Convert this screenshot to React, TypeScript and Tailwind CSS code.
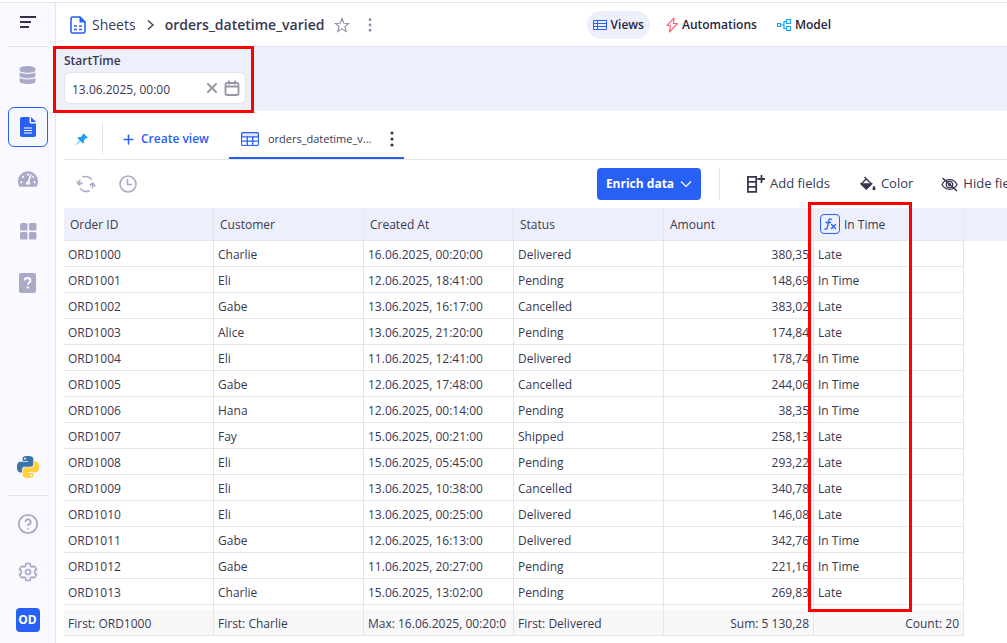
import type { ReactNode } from "react";
import { CircleHelp, Plus, X } from "lucide-react";
import { FaDatabase, FaTachometerAlt } from "react-icons/fa";

const orders = [
  { id: "ORD1000", customer: "Charlie", created: "16.06.2025, 00:20:00", status: "Delivered", amount: "380,35", inTime: "Late" },
  { id: "ORD1001", customer: "Eli", created: "12.06.2025, 18:41:00", status: "Pending", amount: "148,69", inTime: "In Time" },
  { id: "ORD1002", customer: "Gabe", created: "13.06.2025, 16:17:00", status: "Cancelled", amount: "383,02", inTime: "Late" },
  { id: "ORD1003", customer: "Alice", created: "13.06.2025, 21:20:00", status: "Pending", amount: "174,84", inTime: "Late" },
  { id: "ORD1004", customer: "Eli", created: "11.06.2025, 12:41:00", status: "Delivered", amount: "178,74", inTime: "In Time" },
  { id: "ORD1005", customer: "Gabe", created: "12.06.2025, 17:48:00", status: "Cancelled", amount: "244,06", inTime: "In Time" },
  { id: "ORD1006", customer: "Hana", created: "12.06.2025, 00:14:00", status: "Pending", amount: "38,35", inTime: "In Time" },
  { id: "ORD1007", customer: "Fay", created: "15.06.2025, 00:21:00", status: "Shipped", amount: "258,13", inTime: "Late" },
  { id: "ORD1008", customer: "Eli", created: "15.06.2025, 05:45:00", status: "Pending", amount: "293,22", inTime: "Late" },
  { id: "ORD1009", customer: "Eli", created: "13.06.2025, 10:38:00", status: "Cancelled", amount: "340,78", inTime: "Late" },
  { id: "ORD1010", customer: "Eli", created: "13.06.2025, 00:25:00", status: "Delivered", amount: "146,08", inTime: "Late" },
  { id: "ORD1011", customer: "Gabe", created: "12.06.2025, 16:13:00", status: "Delivered", amount: "342,76", inTime: "In Time" },
  { id: "ORD1012", customer: "Gabe", created: "11.06.2025, 20:27:00", status: "Pending", amount: "221,16", inTime: "In Time" },
  { id: "ORD1013", customer: "Charlie", created: "15.06.2025, 13:02:00", status: "Pending", amount: "269,83", inTime: "Late" },
];

const columns = ["Order ID", "Customer", "Created At", "Status", "Amount", "In Time"];

const totals = [
  "First: ORD1000",
  "First: Charlie",
  "Max: 16.06.2025, 00:20:0",
  "First: Delivered",
  "Sum: 5 130,28",
  "Count: 20",
];

function Dots({ className }: { className: string }) {
  return (
    <svg viewBox="0 0 4 16" className={className} fill="currentColor">
      <circle cx="2" cy="2" r="1.6" />
      <circle cx="2" cy="8" r="1.6" />
      <circle cx="2" cy="14" r="1.6" />
    </svg>
  );
}

function SheetIcon() {
  return (
    <svg viewBox="0 0 16 18" className="h-[18px] w-4 shrink-0 text-[#2860f6]" fill="none" stroke="currentColor" strokeWidth="1.600">
      <path d="M3 1h7l5 5v9.500a1.500 1.500 0 0 1-1.500 1.500h-11A1.500 1.500 0 0 1 1 15.500v-13A1.500 1.500 0 0 1 2.500 1z" />
      <path d="M9.500 0v6.500H16z" fill="currentColor" stroke="none" />
      <path d="M4 10h3M9 10h3M4 13.500h3M9 13.500h3" />
    </svg>
  );
}

function DocumentIcon() {
  return (
    <svg viewBox="0 0 16 20" className="h-5 w-4 text-[#2860f6]">
      <path d="M2 0h7.500v5a1.500 1.500 0 0 0 1.500 1.500h5V18a2 2 0 0 1-2 2H2a2 2 0 0 1-2-2V2a2 2 0 0 1 2-2z" fill="currentColor" />
      <path d="M11 0l5 5h-5z" fill="currentColor" />
      <path d="M4 11h8M4 13.500h8M4 16h8" stroke="white" strokeWidth="1.200" />
    </svg>
  );
}

function TilesIcon() {
  return (
    <svg viewBox="0 0 18 18" className="size-[18px]" fill="currentColor">
      <rect x="1" y="1" width="7.500" height="7.500" rx="1.500" />
      <rect x="10" y="1" width="7.500" height="7.500" rx="1.500" />
      <rect x="1" y="10" width="7.500" height="7.500" rx="1.500" />
      <rect x="10" y="10" width="7.500" height="7.500" rx="1.500" />
    </svg>
  );
}

function GuideIcon() {
  return (
    <svg viewBox="0 0 17 20" className="h-5 w-[17px]">
      <rect width="17" height="20" rx="2" fill="currentColor" />
      <path d="M5.500 7.500C5.600 5.800 6.800 5 8.500 5s3 .9 3 2.500c0 1.900-2.700 2-2.700 4.200" fill="none" stroke="white" strokeWidth="1.800" />
      <circle cx="8.700" cy="14.500" r="1.200" fill="white" />
    </svg>
  );
}

function PythonLogo() {
  return (
    <svg viewBox="0 0 24 24" className="size-[22px]">
      <path
        fill="#3a77a8"
        d="M14.25.18l.9.2.73.26.59.3.45.32.34.34.25.34.16.33.1.3.04.26.02.2-.01.13V8.5l-.05.63-.13.55-.21.46-.26.38-.3.31-.33.25-.35.19-.35.14-.33.1-.3.07-.26.04-.21.02H8.77l-.69.05-.59.14-.5.22-.41.27-.33.32-.27.35-.2.36-.15.37-.1.35-.07.32-.04.27-.02.21v3.06H3.17l-.21-.03-.28-.07-.32-.12-.35-.18-.36-.26-.36-.36-.35-.46-.32-.59-.28-.73-.21-.88-.14-1.05-.05-1.23.06-1.22.16-1.04.24-.87.32-.71.36-.57.4-.44.42-.33.42-.24.4-.16.36-.1.32-.05.24-.01h.16l.06.01h8.16v-.83H6.18l-.01-2.75-.02-.37.05-.34.11-.31.17-.28.25-.26.31-.23.38-.2.44-.18.51-.15.58-.12.64-.1.71-.06.77-.04.84-.02 1.27.05zm-6.3 1.98l-.23.33-.08.41.08.41.23.34.33.22.41.09.41-.09.33-.22.23-.34.08-.41-.08-.41-.23-.33-.33-.22-.41-.09-.41.09z"
      />
      <path
        fill="#ffd040"
        d="M21.04 6.11l.28.06.32.12.35.18.36.27.36.35.35.47.32.59.28.73.21.88.14 1.04.05 1.23-.06 1.23-.16 1.04-.24.86-.32.71-.36.57-.4.45-.42.33-.42.24-.4.16-.36.09-.32.05-.24.02-.16-.01h-8.22v.82h5.84l.01 2.76.02.36-.05.34-.11.31-.17.29-.25.25-.31.24-.38.2-.44.17-.51.15-.58.13-.64.09-.71.07-.77.04-.84.01-1.27-.04-1.07-.14-.9-.2-.73-.25-.59-.3-.45-.33-.34-.34-.25-.34-.16-.33-.1-.3-.04-.25-.02-.2.01-.13v-5.34l.05-.64.13-.54.21-.46.26-.38.3-.32.33-.24.35-.2.35-.14.33-.1.3-.06.26-.04.21-.02.13-.01h5.84l.69-.05.59-.14.5-.21.41-.28.33-.32.27-.35.2-.36.15-.36.1-.35.07-.32.04-.28.02-.21V6.07h2.09l.14.01zm-6.47 14.25l-.23.33-.08.41.08.41.23.33.33.23.41.08.41-.08.33-.23.23-.33.08-.41-.08-.41-.23-.33-.33-.23-.41-.08-.41.08z"
      />
    </svg>
  );
}

function GearIcon() {
  return (
    <svg viewBox="0 0 20 20" className="size-5" fill="none" stroke="currentColor" strokeWidth="1.700" strokeLinejoin="round">
      <path d="M8 1.500h4l.5 2.400 1.700 1 2.300-.8 2 3.400L16.700 9v2l1.800 1.500-2 3.400-2.300-.8-1.700 1-.5 2.400H8l-.5-2.400-1.700-1-2.300.8-2-3.400L3.300 11V9L1.500 7.500l2-3.400 2.300.8 1.700-1z" />
      <circle cx="10" cy="10" r="2.500" />
    </svg>
  );
}

function SideButton({ label, active, children }: { label: string; active?: boolean; children: ReactNode }) {
  return (
    <button
      aria-label={label}
      className={
        active
          ? "flex size-10 items-center justify-center rounded-md border border-[#2860f6] bg-[#f5f7ff]"
          : "flex size-10 items-center justify-center text-[#a9abc6]"
      }
    >
      {children}
    </button>
  );
}

function Sidebar() {
  return (
    <nav className="flex w-14 shrink-0 flex-col items-center border-r border-[#e4e5ec] bg-[#f9f9ff] pb-[11px]">
      <button aria-label="Toggle menu" className="flex h-[43px] w-10 items-center justify-center pb-[6px] text-[#33334f]">
        <svg viewBox="0 0 16 12" className="h-3 w-4" stroke="currentColor" strokeWidth="2">
          <path d="M0 1h16M0 6h11M0 11h9" />
        </svg>
      </button>
      <div className="h-px w-10 bg-[#e4e5ec]" />
      <div className="mt-2 flex flex-col gap-3">
        <SideButton label="Data sources">
          <FaDatabase className="h-[18px] w-[17px]" />
        </SideButton>
        <SideButton label="Sheets" active>
          <DocumentIcon />
        </SideButton>
        <SideButton label="Dashboards">
          <FaTachometerAlt className="size-5" />
        </SideButton>
        <SideButton label="Apps">
          <TilesIcon />
        </SideButton>
        <SideButton label="Guide">
          <GuideIcon />
        </SideButton>
      </div>
      <button aria-label="Python" className="mt-auto flex size-6 items-center justify-center">
        <PythonLogo />
      </button>
      <div className="mt-4 h-px w-10 bg-[#e4e5ec]" />
      <button aria-label="Help" className="mt-4 flex size-6 items-center justify-center text-[#a9abc6]">
        <CircleHelp size={22} strokeWidth={2} />
      </button>
      <button aria-label="Settings" className="mt-6 flex size-6 items-center justify-center text-[#a9abc6]">
        <GearIcon />
      </button>
      <button className="mt-6 size-6 rounded bg-[#2860f6] text-xs font-bold text-white">OD</button>
    </nav>
  );
}

function Header() {
  return (
    <header className="flex h-11 shrink-0 items-center border-b border-[#e4e5ec] pl-[14px] text-sm">
      <SheetIcon />
      <a href="#sheets" className="ml-[6px]">Sheets</a>
      <svg viewBox="0 0 7 12" className="ml-[11px] h-3 w-[7px]" fill="none" stroke="currentColor" strokeWidth="1.300">
        <path d="M1 1.500L6 6l-5 4.500" />
      </svg>
      <h1 className="ml-[11px] font-semibold">orders_datetime_varied</h1>
      <button aria-label="Add to favourites" className="ml-[10px] text-[#8c8ea8]">
        <svg viewBox="0 0 16 16" className="size-4" fill="none" stroke="currentColor" strokeWidth="1.100">
          <path d="M8 1.500l1.800 4.700 4.900.3-3.800 3.200 1.300 4.900L8 11.900l-4.200 2.700 1.300-4.900L1.300 6.500l4.900-.3z" />
        </svg>
      </button>
      <button aria-label="Sheet menu" className="ml-[18px] text-[#8c8ea8]">
        <Dots className="h-[14px] w-1" />
      </button>
      <div className="mr-[176px] ml-auto flex items-center gap-4 text-xs font-semibold text-[#26263e]">
        <button className="flex h-7 items-center gap-1 rounded-full bg-[#edf0fa] px-[6px]">
          <svg viewBox="0 0 14 12" className="h-3 w-[14px] text-[#2860f6]" fill="none" stroke="currentColor">
            <path d="M.5 1.500h13v9H.5zM.5 4.500h13M.5 7.500h13M4.500 1.500v9" />
          </svg>
          Views
        </button>
        <button className="flex items-center gap-1">
          <svg viewBox="0 0 12 16" className="h-4 w-3" fill="none" stroke="#ff6878" strokeWidth="1.200" strokeLinejoin="round">
            <path d="M8 1L1 8.500h3.500L3.500 15 11.500 6.500H7.500z" />
          </svg>
          Automations
        </button>
        <button className="ml-1 flex items-center gap-1">
          <svg viewBox="0 0 14 14" className="size-[14px]" fill="none" stroke="#1da0fa" strokeWidth="1.200">
            <path d="M.5 5.500h3v3h-3zM9.500 1.500h4v4h-4zM9.500 8.500h4v4h-4zM3.500 7H7M9.500 3.500H7v7h2.500" />
          </svg>
          Model
        </button>
      </div>
    </header>
  );
}

function FilterBar() {
  return (
    <section className="relative h-16 shrink-0 bg-[#edf0fa] pt-[5px] pl-2">
      <label htmlFor="start-time" className="block text-xs leading-[18px] font-semibold">StartTime</label>
      <div className="mt-[2px] flex h-8 w-[182px] items-center rounded-md border border-[#e4e5ec] bg-white pr-[5px]">
        <input id="start-time" defaultValue="13.06.2025, 00:00" className="h-full min-w-0 flex-1 pt-[2px] pl-[7px] text-xs outline-none" />
        <button aria-label="Clear" className="text-[#9697a8]">
          <X size={16} strokeWidth={3} />
        </button>
        <button aria-label="Open calendar" className="ml-1 text-[#9697a8]">
          <svg viewBox="0 0 16 16" className="size-4" fill="none" stroke="currentColor" strokeWidth="1.800">
            <rect x="1.500" y="3" width="13" height="12" rx="1.500" />
            <path d="M1.500 6.500h13M5 .5v4M11 .5v4" />
          </svg>
        </button>
      </div>
      <div className="pointer-events-none absolute -top-px -left-[3px] z-10 h-[67px] w-[201px] border-3 border-[#fe0000]" />
    </section>
  );
}

function ViewTabs() {
  return (
    <div className="ml-2 flex h-[49px] shrink-0 items-stretch border-b border-[#e4e5ec]">
      <button aria-label="Pin" className="ml-3 pt-2 text-[#1da0fa]">
        <svg viewBox="0 0 12 12" className="size-3" fill="currentColor">
          <path d="M7.500.3l4.200 4.200-1 .9-.8-.2-2 2 .2 2.300-1.200 1.100-2.500-2.500L.8 11.700l-.5-.5 3.600-3.600L1.400 5.100 2.500 4l2.300.1 2-2-.2-.8z" />
        </svg>
      </button>
      <div className="mt-3 ml-[14px] h-8 w-px bg-[#e4e5ec]" />
      <button className="ml-[18px] flex items-center gap-[5px] pt-2 text-xs font-semibold text-[#2860f6]">
        <Plus size={15} strokeWidth={2.4} />
        Create view
      </button>
      <div className="ml-5 flex w-[175px] items-center border-b-2 border-[#2860f6] pt-[10px] pl-3 text-[11px]">
        <svg viewBox="0 0 18 14" className="h-[14px] w-[18px] shrink-0" fill="none" stroke="#2860f6" strokeWidth="1.300">
          <rect x=".6" y=".6" width="16.800" height="12.800" rx="1.500" fill="#e0e9ff" />
          <path d="M1.200 5h15.600v6.500a1.300 1.300 0 0 1-1.300 1.300h-13a1.300 1.300 0 0 1-1.300-1.300z" fill="white" stroke="none" />
          <path d="M.6 4.800h16.800M.6 9.200h16.800M6.300 4.800v8.500M11.700 4.800v8.500" />
        </svg>
        <button className="ml-[9px] w-[107px] text-left whitespace-nowrap">orders_datetime_v...</button>
        <button aria-label="View menu" className="ml-[15px]">
          <Dots className="h-4 w-1" />
        </button>
      </div>
    </div>
  );
}

function Toolbar() {
  return (
    <div className="flex h-12 shrink-0 items-center pl-5 text-[13px] font-medium">
      <button aria-label="Refresh" className="text-[#a9abc6]">
        <svg viewBox="0 0 20 18" className="h-[18px] w-5" fill="none" stroke="currentColor" strokeWidth="1.600">
          <path d="M6.500 2.300A7.300 7.300 0 0 1 15.800 4.600M13.500 15.700A7.300 7.300 0 0 1 4.200 13.400M3.200 9.500A7 7 0 0 1 4.200 4.600M16.800 8.500a7 7 0 0 1-1 4.900" />
          <path d="M.8 6.600L3.200 9.800l3-2.300M19.200 11.400L16.800 8.200l-3 2.300" />
        </svg>
      </button>
      <button aria-label="History" className="ml-[22px] text-[#a9abc6]">
        <svg viewBox="0 0 20 20" className="size-5" fill="none" stroke="currentColor" strokeWidth="1.600">
          <circle cx="10" cy="10" r="8" />
          <path d="M9.500 5v5.500H14" />
        </svg>
      </button>
      <div className="ml-auto flex w-[410px] items-center overflow-hidden whitespace-nowrap">
        <button className="flex h-8 w-[104px] shrink-0 items-center justify-center gap-[6px] rounded bg-[#2860f6] text-xs font-bold text-white">
          Enrich data
          <svg viewBox="0 0 12 8" className="h-2 w-3" fill="none" stroke="currentColor" strokeWidth="1.200">
            <path d="M1 1.500l5 5 5-5" />
          </svg>
        </button>
        <div className="ml-[18px] h-8 w-px shrink-0 bg-[#e4e5ec]" />
        <button className="ml-[27px] flex shrink-0 items-center gap-[5px]">
          <svg viewBox="0 0 18 18" className="size-[18px]" fill="none" stroke="currentColor" strokeWidth="1.800">
            <path d="M.9 1.800h8.300v15H.9zM.9 6.800h8.300M.9 11.800h8.300" />
            <path d="M14.500 0v8M10.500 4h8" />
          </svg>
          Add fields
        </button>
        <button className="ml-[30px] flex shrink-0 items-center gap-[5px]">
          <svg viewBox="0 0 16 16" className="size-4" fill="none" stroke="currentColor" strokeWidth="1.400">
            <path d="M4.500 1l6.800 6.800-5 5-5-4.800 5-5.200" strokeLinejoin="round" />
            <path d="M1.300 8h10L6.300 13z" fill="currentColor" />
            <path d="M14 9.500c1 1.500 1.500 2.200 1.500 3.200a1.500 1.500 0 0 1-3 0c0-1 .5-1.700 1.500-3.200z" fill="currentColor" stroke="none" />
          </svg>
          Color
        </button>
        <button className="ml-[28px] flex shrink-0 items-center gap-[5px]">
          <svg viewBox="0 0 17 15" className="h-[15px] w-[17px]" fill="none" stroke="currentColor" strokeWidth="1.300">
            <path d="M1 7.500C2.500 4.500 5.200 2.700 8.500 2.700s6 1.800 7.500 4.800c-1.500 3-4.200 4.800-7.500 4.800S2.500 10.500 1 7.500z" />
            <circle cx="8.500" cy="7.500" r="3.200" />
            <circle cx="8.500" cy="7.500" r="1" />
            <path d="M1.500 1l14.500 13" strokeWidth="1.500" />
          </svg>
          Hide fields
        </button>
      </div>
    </div>
  );
}

function FormulaBadge() {
  return (
    <span className="flex size-5 items-center justify-center rounded border border-[#2860f6] text-[#2860f6]">
      <svg viewBox="0 0 14 14" className="size-[14px]" fill="none" stroke="currentColor" strokeWidth="1.300" strokeLinecap="round">
        <path d="M8.500 2.200C6.800 1.300 6 2.300 5.700 4L4.500 10c-.4 2-1.200 2.500-2.700 1.900M3 5.500h4.500M8.500 7.500l4 4M12.500 7.500l-4 4" />
      </svg>
    </span>
  );
}

function OrdersTable() {
  const cell = "h-[26px] border-r border-b border-[#e4e5ec] px-1 pt-[2px]";

  return (
    <section className="relative ml-2">
      <table className="w-full table-fixed border-separate border-spacing-0 text-xs leading-4">
        <colgroup>
          {columns.map((name) => (
            <col key={name} className="w-[150px]" />
          ))}
          <col />
        </colgroup>
        <thead className="bg-[#edf0fa]">
          <tr>
            {columns.map((name) => (
              <th key={name} className="h-[33px] border-r border-b border-[#e3e5f0] px-[6px] text-left font-normal">
                <div className="flex items-center gap-1">
                  {name === "In Time" && <FormulaBadge />}
                  <span className="pt-[2px]">{name}</span>
                </div>
              </th>
            ))}
            <td />
          </tr>
        </thead>
        <tbody>
          {orders.map((order) => (
            <tr key={order.id}>
              <td className={cell}>{order.id}</td>
              <td className={cell}>{order.customer}</td>
              <td className={cell}>{order.created}</td>
              <td className={cell}>{order.status}</td>
              <td className={cell + " text-right"}>{order.amount}</td>
              <td className={cell}>{order.inTime}</td>
              <td />
            </tr>
          ))}
          <tr>
            {columns.map((name) => (
              <td key={name} className="h-[5px] border-r border-[#e4e5ec]" />
            ))}
            <td />
          </tr>
        </tbody>
        <tfoot>
          <tr>
            {totals.map((total, i) => (
              <td key={total} className={i > 3 ? cell + " bg-[#f8f8f8] text-right" : cell + " bg-[#f8f8f8]"}>
                <div className="whitespace-nowrap">{total}</div>
              </td>
            ))}
            <td />
          </tr>
        </tfoot>
      </table>
      <div className="pointer-events-none absolute -top-[6px] bottom-6 left-[744px] w-[104px] border-3 border-[#fe0000]" />
    </section>
  );
}

export default function App() {
  return (
    <div className="flex min-h-screen flex-col bg-white pt-[2px] font-['Open_Sans','Noto_Sans',sans-serif] text-[#383853]">
      <div className="flex flex-1 border-t border-[#e4e5ec]">
        <Sidebar />
        <main className="flex min-w-0 flex-1 flex-col">
          <Header />
          <FilterBar />
          <ViewTabs />
          <Toolbar />
          <OrdersTable />
        </main>
      </div>
    </div>
  );
}
